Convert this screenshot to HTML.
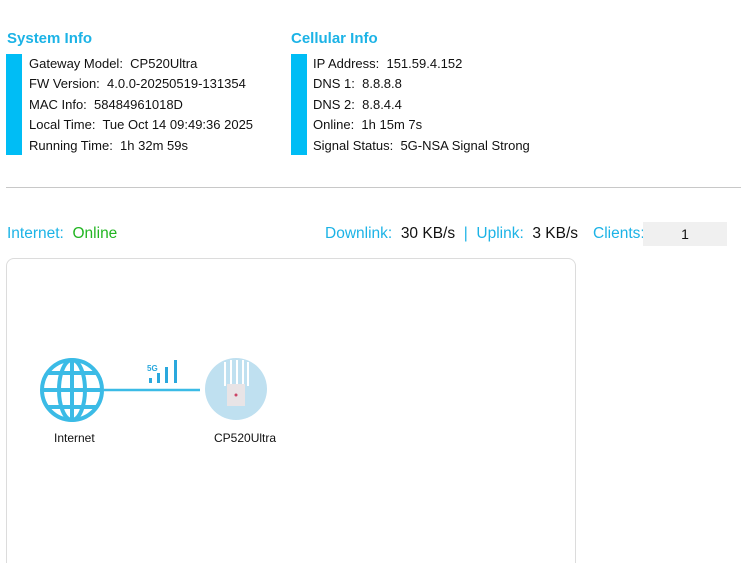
<!DOCTYPE html>
<html style="overflow:hidden"><head><style>
html,body{margin:0;width:741px;height:563px;overflow:hidden}
body{background:#fff;position:relative;font-family:"Liberation Sans",sans-serif;}
.a{position:absolute;white-space:nowrap}
.t{font-weight:bold;font-size:15px;color:#1cb3e6}
.bar{position:absolute;background:#00bdf5;width:16px}
.r{font-size:13px;color:#111;line-height:20.4px}
.b{color:#1cb3e6}
</style></head><body>
<div class="a t" style="left:7px;top:30px">System Info</div>
<div class="a t" style="left:291px;top:30px">Cellular Info</div>
<div class="bar" style="left:6px;top:54px;height:101px"></div>
<div class="bar" style="left:291px;top:54px;height:101px"></div>
<div class="a r" style="left:29px;top:54px">Gateway Model:&nbsp; CP520Ultra<br>FW Version:&nbsp; 4.0.0-20250519-131354<br>MAC Info:&nbsp; 58484961018D<br>Local Time:&nbsp; Tue Oct 14 09:49:36 2025<br>Running Time:&nbsp; 1h 32m 59s</div>
<div class="a r" style="left:313px;top:54px">IP Address:&nbsp; 151.59.4.152<br>DNS 1:&nbsp; 8.8.8.8<br>DNS 2:&nbsp; 8.8.4.4<br>Online:&nbsp; 1h 15m 7s<br>Signal Status:&nbsp; 5G-NSA Signal Strong</div>
<div class="a" style="left:6px;top:187px;width:735px;height:1px;background:#c8c8c8"></div>
<div class="a" style="left:7px;top:225px;font-size:15.5px"><span class="b">Internet:</span>&nbsp; <span style="color:#22b522">Online</span></div>
<div class="a" style="left:325px;top:225px;font-size:15.5px;color:#111"><span class="b">Downlink:</span>&nbsp; 30 KB/s&nbsp; <span class="b">|</span>&nbsp; <span class="b">Uplink:</span>&nbsp; 3 KB/s</div>
<div class="a b" style="left:593px;top:225px;font-size:15.5px">Clients:</div>
<div class="a" style="left:643px;top:222px;width:84px;height:24px;background:#f0f0f0;font-size:14px;line-height:24px;text-align:center;color:#111">1</div>
<div class="a" style="left:6px;top:258px;width:568px;height:320px;border:1px solid #dcdcdc;border-radius:8px"></div>
<svg class="a" style="left:0;top:340px" width="300" height="120">
<line x1="104" y1="50" x2="200" y2="50" stroke="#3bbbe6" stroke-width="2.5"/>
<g fill="none" stroke="#3bbbe6" stroke-width="4">
<circle cx="72" cy="50" r="30"/>
<ellipse cx="72" cy="50" rx="13" ry="30"/>
<line x1="72" y1="20" x2="72" y2="80"/>
<line x1="42" y1="50" x2="102" y2="50"/>
<path d="M47 33 H97 M47 67 H97"/>
</g>
<text x="147" y="31" font-size="8" font-weight="bold" fill="#2aa8dd" font-family="Liberation Sans">5G</text>
<g fill="#2aa8dd"><rect x="149" y="38" width="3" height="5"/><rect x="157" y="33" width="3" height="10"/><rect x="165" y="27" width="3" height="16"/><rect x="174" y="20" width="3" height="23"/></g>
<circle cx="236" cy="49" r="31" fill="#bfe0f0"/>
<g stroke="#fff" stroke-width="2"><line x1="225" y1="22" x2="225" y2="46"/><line x1="231" y1="20" x2="231" y2="46"/><line x1="237" y1="20" x2="237" y2="46"/><line x1="243" y1="20" x2="243" y2="46"/><line x1="248" y1="22" x2="248" y2="46"/></g>
<rect x="227" y="44" width="18" height="22" fill="#e8e4e6"/>
<circle cx="236" cy="55" r="1.5" fill="#c46"/>
<text x="54" y="102" font-size="12" fill="#111">Internet</text>
<text x="214" y="102" font-size="12" fill="#111">CP520Ultra</text>
</svg>
</body></html>
